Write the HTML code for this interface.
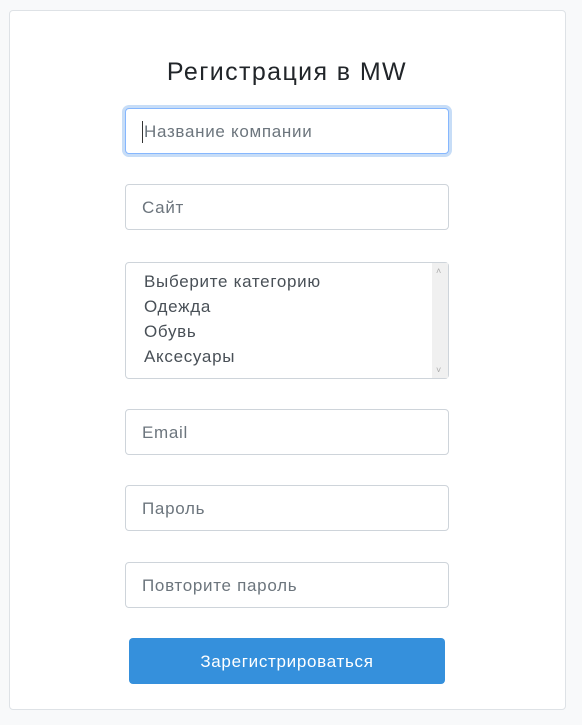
<!DOCTYPE html>
<html><head><meta charset="utf-8"><style>
body{margin:0;background:#f8f9fa;width:582px;height:725px;font-family:"Liberation Sans","DejaVu Sans",sans-serif;}
.card{position:absolute;left:9px;top:10px;width:555px;height:698px;background:#fff;border:1px solid #dee2e6;border-radius:4px;}
h1{position:absolute;left:0;top:58px;width:574px;margin:0;text-align:center;font-weight:400;font-size:25px;letter-spacing:1.4px;color:#212529;}
.in{position:absolute;left:125px;width:322px;height:44px;border:1px solid #ced4da;border-radius:4px;background:#fff;box-sizing:content-box;font-size:17px;letter-spacing:0.7px;color:#6c757d;line-height:46px;padding:0;}
.in span{position:absolute;left:16px;}
.focus{border-color:#86b7fe;box-shadow:0 0 0 3px #c7ddf7;}
.sel{height:115px;line-height:25px;color:#495057;}
.sb{position:absolute;right:0;top:0;width:16px;height:115px;background:#f0f0f0;}
.btn{position:absolute;left:129px;top:638px;width:316px;height:46px;background:#3590dc;border-radius:4px;color:#fff;font-size:17px;letter-spacing:0.7px;text-align:center;line-height:47px;}
</style></head><body>
<div class="card"></div>
<h1>Регистрация в MW</h1>
<div class="in focus" style="top:108px"><span style="border-left:1px solid #333;left:16px;padding-left:1px;line-height:22px;top:12px">Название компании</span></div>
<div class="in" style="top:184px"><span>Сайт</span></div>
<div class="in sel" style="top:262px"><div style="position:absolute;left:18px;top:6px">Выберите категорию<br>Одежда<br>Обувь<br>Аксесуары</div><div class="sb"><div style="position:absolute;left:4px;top:2px;font-size:9px;color:#aaa;line-height:12px">˄</div><div style="position:absolute;left:4px;bottom:2px;font-size:9px;color:#aaa;line-height:12px">˅</div></div></div>
<div class="in" style="top:409px"><span>Email</span></div>
<div class="in" style="top:485px"><span>Пароль</span></div>
<div class="in" style="top:562px"><span>Повторите пароль</span></div>
<div class="btn">Зарегистрироваться</div>
</body></html>
